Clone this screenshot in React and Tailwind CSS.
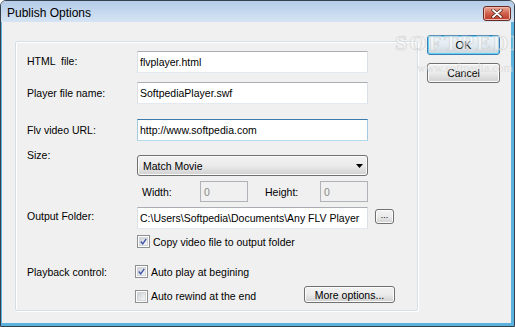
import React from "react";

function TextBox({ value, className = "", focused = false }) {
  return (
    <div
      className={
        "h-[22px] flex items-center pl-[2px] overflow-hidden whitespace-nowrap bg-white border border-t-[#abadb3] border-x-[#dbdfe6] border-b-[#e3e9ef] " +
        (focused ? "!border-t-[#3d7bad] !border-x-[#a4c9e3] !border-b-[#b7d9ed] " : "") +
        className
      }
    >
      {value}
    </div>
  );
}

function Check({ checked }) {
  return (
    <div className="w-[13px] h-[13px] shrink-0 border border-[#8e8f8f] bg-white p-[1px]">
      <div className="w-full h-full border border-[#d3d5d8] bg-gradient-to-br from-[#cdd1d6] to-[#f6f6f6] flex items-center justify-center">
        {checked && (
          <svg width="9" height="9" viewBox="0 0 9 9">
            <path d="M1 4.5 L3.5 7.5 L8 1" fill="none" stroke="#3b50a6" strokeWidth="1.7" />
          </svg>
        )}
      </div>
    </div>
  );
}

function Btn({ children, className = "" }) {
  return (
    <div
      className={
        "flex items-center justify-center rounded-[3px] border border-[#707070] bg-gradient-to-b from-[#f2f2f2] via-[#ebebeb] to-[#cfcfcf] shadow-[inset_0_0_0_1px_#fcfcfc] " +
        className
      }
    >
      {children}
    </div>
  );
}

export default function App() {
  return (
    <div className="relative w-[515px] h-[327px] flex flex-col overflow-hidden rounded-t-[6px] border border-[#34404c] bg-[#f0f0f0] font-['Liberation_Sans',Arial,sans-serif] text-[10.5px] leading-[12px] text-black">
      {/* Title bar */}
      <div className="h-[21px] shrink-0 flex items-center justify-between bg-gradient-to-b from-[#b4cce8] to-[#d5e4f3] pl-[6px] pr-[3px]">
        <span className="text-[12px] leading-[14px] mt-[2px]">Publish Options</span>
        <div className="w-[28px] h-[15px] mt-[3px] rounded-[3px] border border-[#6b2a22] bg-gradient-to-b from-[#e8a899] via-[#d0604c] to-[#b9382a] flex items-center justify-center shadow-[inset_0_0_0_1px_#f0b8aa]">
          <svg width="12" height="9" viewBox="0 0 12 9">
            <path d="M2 1 L10 8 M10 1 L2 8" stroke="#4a1a14" strokeWidth="3.2" strokeLinecap="round" />
            <path d="M2 1 L10 8 M10 1 L2 8" stroke="#ffffff" strokeWidth="1.8" strokeLinecap="round" />
          </svg>
        </div>
      </div>

      {/* Body */}
      <div className="flex-1 flex items-start border-l border-r-[3px] border-b-[3px] border-[#5cb2de] pl-[13px] pt-[13px]">
        {/* Group box */}
        <div className="mt-[6px] w-[403px] h-[270px] shrink-0 border border-[#d5dfe5] rounded-[2px] shadow-[inset_1px_1px_0_#ffffff,1px_1px_0_#ffffff] pl-[11px] pt-[9px] flex flex-col">
          {/* Row 1 */}
          <div className="flex items-center h-[22px]">
            <div className="w-[110px] shrink-0 whitespace-pre -mt-[3px]">HTML  file:</div>
            <TextBox value="flvplayer.html" className="w-[231px]" />
          </div>
          {/* Row 2 */}
          <div className="flex items-center h-[22px] mt-[9px]">
            <div className="w-[110px] shrink-0">Player file name:</div>
            <TextBox value="SoftpediaPlayer.swf" className="w-[231px]" />
          </div>
          {/* Row 3 */}
          <div className="flex items-center h-[22px] mt-[15px]">
            <div className="w-[110px] shrink-0">Flv video URL:</div>
            <TextBox value="http://www.softpedia.com" className="w-[231px]" focused />
          </div>
          {/* Row 4 */}
          <div className="flex items-start h-[21px] mt-[14px]">
            <div className="w-[110px] shrink-0 -mt-[6px]">Size:</div>
            <div className="w-[231px] h-[21px] flex items-center justify-between pl-[5px] pr-[4px] rounded-[3px] border border-[#707070] bg-gradient-to-b from-[#f2f2f2] via-[#ebebeb] to-[#d0d0d0] shadow-[inset_0_0_0_1px_#fbfbfb]">
              <span>Match Movie</span>
              <svg width="7" height="4" viewBox="0 0 7 4">
                <path d="M0 0 H7 L3.5 4 Z" fill="#000" />
              </svg>
            </div>
          </div>
          {/* Row 5 */}
          <div className="flex items-center h-[21px] mt-[5px]">
            <div className="w-[110px] shrink-0" />
            <div className="w-[63px] shrink-0 pl-[5px]">Width:</div>
            <div className="w-[48px] h-[21px] flex items-center pl-[3px] border border-[#afb3b7] bg-[#f0f0f0] text-[#8a8a8a]">0</div>
            <div className="w-[72px] shrink-0 pl-[17px]">Height:</div>
            <div className="w-[48px] h-[21px] flex items-center pl-[3px] border border-[#afb3b7] bg-[#f0f0f0] text-[#8a8a8a]">0</div>
          </div>
          {/* Row 6 */}
          <div className="flex items-center h-[22px] mt-[5px]">
            <div className="w-[110px] shrink-0 -mt-[4px]">Output Folder:</div>
            <TextBox value="C:\Users\Softpedia\Documents\Any FLV Player" className="w-[231px]" />
            <Btn className="ml-[7px] w-[19px] h-[15px] -mt-[3px]">
              <span className="text-[9px] leading-none -mt-[3px]">...</span>
            </Btn>
          </div>
          {/* Row 7 */}
          <div className="flex items-center h-[13px] mt-[6px]">
            <div className="w-[110px] shrink-0" />
            <Check checked />
            <span className="ml-[3px] whitespace-nowrap">Copy video file to output folder</span>
          </div>
          {/* Row 8 */}
          <div className="flex items-center h-[13px] mt-[17px]">
            <div className="w-[108px] shrink-0">Playback control:</div>
            <Check checked />
            <span className="ml-[3px] whitespace-nowrap">Auto play at begining</span>
          </div>
          {/* Row 9 */}
          <div className="flex items-center h-[17px] mt-[8px]">
            <div className="w-[108px] shrink-0" />
            <div className="mt-[3px] flex items-center">
              <Check />
              <span className="ml-[3px] whitespace-nowrap w-[153px]">Auto rewind at the end</span>
            </div>
            <Btn className="w-[91px] h-[17px]">More options...</Btn>
          </div>
        </div>

        {/* Buttons */}
        <div className="ml-[9px] flex flex-col gap-[8px]">
          <div className="w-[73px] h-[20px] flex items-center justify-center rounded-[3px] border border-[#3c7fb1] bg-gradient-to-b from-[#eef5fa] via-[#e2ebf1] to-[#cbd5dc] shadow-[inset_0_0_0_1px_#5fd0f8] text-[11px]">
            OK
          </div>
          <Btn className="w-[73px] h-[20px]">Cancel</Btn>
        </div>
      </div>

      {/* Watermark */}
      <div className="absolute left-[394px] top-[30px] pointer-events-none whitespace-nowrap font-['Liberation_Serif',serif] font-bold text-[22px] leading-[24px] tracking-[2px] text-white/60 [-webkit-text-stroke:0.7px_#cfcfcf] opacity-80">
        SOFTPEDIA
      </div>
      <div className="absolute left-[416px] top-[61px] pointer-events-none whitespace-nowrap font-['Liberation_Serif',serif] text-[12px] leading-[12px] text-[#d8d8d8] opacity-70">
        www.softpedia.com
      </div>
    </div>
  );
}
